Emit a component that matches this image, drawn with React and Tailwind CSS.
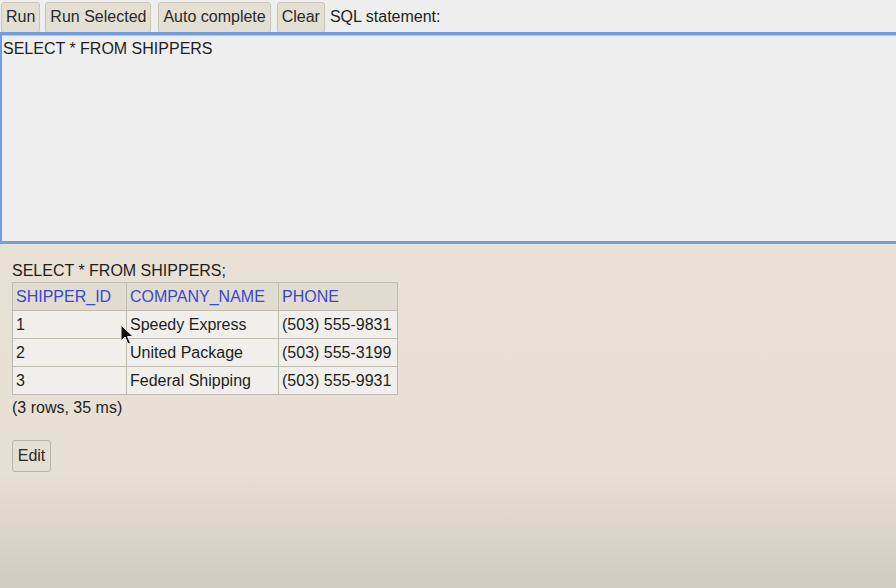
const ROWS = [
  { id: '1', name: 'Speedy Express', phone: '(503) 555-9831' },
  { id: '2', name: 'United Package', phone: '(503) 555-3199' },
  { id: '3', name: 'Federal Shipping', phone: '(503) 555-9931' },
]

function ToolButton({ children, className = '' }) {
  return (
    <button
      type="button"
      className={`h-[31px] px-[4px] rounded-[3px] border border-[#c9c5b9] bg-[#e3dfd3] text-[16px] text-[#2a2a2a] leading-none ${className}`}
    >
      {children}
    </button>
  )
}

export default function App() {
  return (
    <div className="relative w-[896px] h-[588px] overflow-hidden flex flex-col font-['Liberation_Sans',Arial,sans-serif] bg-[#eeeeee]">
      <div className="flex items-center pt-[2px] pl-[1px] h-[32px]">
        <ToolButton>Run</ToolButton>
        <ToolButton className="ml-[5px]">Run Selected</ToolButton>
        <ToolButton className="ml-[7px]">Auto complete</ToolButton>
        <ToolButton className="ml-[6px]">Clear</ToolButton>
        <span className="ml-[5px] text-[16px] text-[#1e1e1e]">SQL statement:</span>
      </div>

      <div className="h-[212px] w-[900px] border-t-[3px] border-b-[3px] border-l-[2px] border-[#6f9de0] bg-[#eeeeee] shadow-[inset_0_1px_0_#a9c6ee]">
        <div className="pl-[1px] pt-[2px] text-[16px] text-[#1e1e1e]">SELECT * FROM SHIPPERS</div>
      </div>

      <div className="flex-1 px-[12px] pt-[17px] bg-[linear-gradient(to_bottom,#e8e1d5_0%,#e7e0d4_66%,#d0ccbf_100%)] text-[16px] text-[#1e1e1e]">
        <div className="leading-[20px]">SELECT * FROM SHIPPERS;</div>
        <table className="mt-[1px] border-collapse border border-[#b4b0a5]">
          <thead>
            <tr className="bg-[#e1dcd0] h-[28px]">
              <th className="w-[114px] border border-[#bfbbb0] px-[3px] text-left font-normal text-[#3a46d0]">SHIPPER_ID</th>
              <th className="w-[152px] border border-[#bfbbb0] px-[3px] text-left font-normal text-[#3a46d0]">COMPANY_NAME</th>
              <th className="w-[119px] border border-[#bfbbb0] px-[3px] text-left font-normal text-[#3a46d0]">PHONE</th>
            </tr>
          </thead>
          <tbody>
            {ROWS.map((r) => (
              <tr key={r.id} className="bg-[#f0efec] h-[28px]">
                <td className="border border-[#bfbbb0] px-[3px]">{r.id}</td>
                <td className="border border-[#bfbbb0] px-[3px]">{r.name}</td>
                <td className="border border-[#bfbbb0] px-[3px]">{r.phone}</td>
              </tr>
            ))}
          </tbody>
        </table>
        <div className="mt-[3px] leading-[20px]">(3 rows, 35 ms)</div>
        <button
          type="button"
          className="mt-[22px] h-[32px] w-[39px] rounded-[3px] border border-[#b9b5aa] bg-[#e3dfd3] text-[16px] text-[#2a2a2a] leading-none"
        >
          Edit
        </button>
      </div>

      {/* mouse pointer captured in the screenshot */}
      <svg className="absolute left-[120px] top-[324px]" width="14" height="22" viewBox="0 0 14 22">
        <path d="M1 1 L1 17 L5 13 L8 20 L10.5 19 L7.5 12.5 L13 12.5 Z" fill="#111" stroke="#eee" strokeWidth="1" />
      </svg>
    </div>
  )
}
